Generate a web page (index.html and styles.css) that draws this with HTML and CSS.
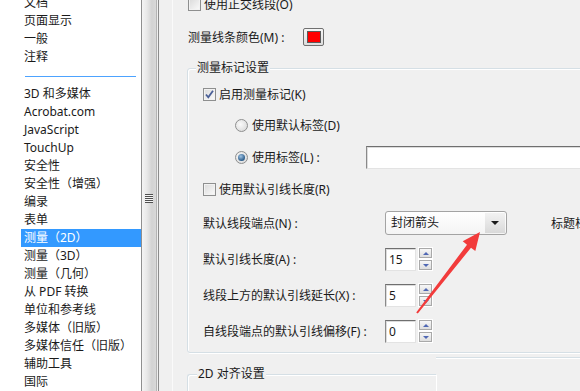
FILE: index.html
```html
<!DOCTYPE html>
<html lang="zh-CN">
<head>
    <meta charset="UTF-8">
    <title>首选项 - 测量（2D）</title>
    <link rel="stylesheet" href="styles.css">
</head>
<body>
    <div class="window">
        <!-- Lista de categorías -->
        <div class="nav">
            <ul class="cats">
                <li>文档</li>
                <li>页面显示</li>
                <li>一般</li>
                <li>注释</li>
                <li class="sep"></li>
                <li>3D 和多媒体</li>
                <li>Acrobat.com</li>
                <li>JavaScript</li>
                <li>TouchUp</li>
                <li>安全性</li>
                <li>安全性（增强）</li>
                <li>编录</li>
                <li>表单</li>
                <li class="active">测量（2D）</li>
                <li>测量（3D）</li>
                <li>测量（几何）</li>
                <li>从 PDF 转换</li>
                <li>单位和参考线</li>
                <li>多媒体（旧版）</li>
                <li>多媒体信任（旧版）</li>
                <li>辅助工具</li>
                <li>国际</li>
            </ul>
        </div>
        <div class="scrollbar"><span class="grip"></span></div>
        <div class="splitter"></div>

        <!-- Panel de opciones -->
        <div class="panel">
            <div class="row row-top">
                <span class="cb"></span>
                <span>使用正交线段(O)</span>
            </div>
            <div class="row row-color">
                <span class="lbl-color">测量线条颜色(M) :</span>
                <span class="swatch"><span class="swatch-fill"></span></span>
            </div>

            <div class="group group-marks">
                <span class="legend">测量标记设置</span>

                <div class="row r1">
                    <span class="cb checked">
                        <svg width="11" height="11" viewBox="0 0 11 11"><path d="M2 5.5 L4.3 8.3 L9 1.8" fill="none" stroke="#4a5f97" stroke-width="1.8"/></svg>
                    </span>
                    <span>启用测量标记(K)</span>
                </div>
                <div class="row r2 indent">
                    <span class="rd"></span>
                    <span>使用默认标签(D)</span>
                </div>
                <div class="row r3 indent">
                    <span class="rd on"></span>
                    <span class="lbl-tag">使用标签(L) :</span>
                    <span class="textbox wide"></span>
                </div>
                <div class="row r4">
                    <span class="cb"></span>
                    <span>使用默认引线长度(R)</span>
                </div>
                <div class="row r5">
                    <span class="lbl">默认线段端点(N) :</span>
                    <span class="combo">
                        <span class="combo-text">封闭箭头</span>
                        <span class="combo-btn"><span class="tri-down"></span></span>
                    </span>
                    <span class="side-label">标题栏</span>
                </div>
                <div class="row r6">
                    <span class="lbl">默认引线长度(A) :</span>
                    <span class="textbox num">15</span>
                    <span class="spin"><span class="spin-up"></span><span class="spin-down"></span></span>
                </div>
                <div class="row r7">
                    <span class="lbl">线段上方的默认引线延长(X) :</span>
                    <span class="textbox num">5</span>
                    <span class="spin"><span class="spin-up"></span><span class="spin-down"></span></span>
                </div>
                <div class="row r8">
                    <span class="lbl">自线段端点的默认引线偏移(F) :</span>
                    <span class="textbox num">0</span>
                    <span class="spin"><span class="spin-up"></span><span class="spin-down"></span></span>
                </div>
            </div>

            <div class="group group-align">
                <span class="legend">2D 对齐设置</span>
            </div>
        </div>

        <!-- Flecha roja de anotación -->
        <svg class="arrow" width="580" height="391" viewBox="0 0 580 391">
            <polygon points="416.2,312.4 467,244.7 462.7,241.3 480,232 475.3,251.1 471,247.7 417.8,313.6" fill="#f23b3b"/>
        </svg>
    </div>
</body>
</html>
```

FILE: styles.css
```css
body {
    margin: 0;
    padding: 0;
    width: 580px;
    height: 391px;
    overflow: hidden;
    background-color: #f0f0f0;
    font-family: 'Noto Sans', 'Noto Sans CJK SC', sans-serif;
    font-size: 12px;
    color: #1a1a1a;
}

.window {
    position: relative;
    display: flex;
    height: 391px;
}

/* lista izquierda */
.nav {
    flex: none;
    width: 141px;
    background-color: #ffffff;
    border-right: 1px solid #8f8f8f;
    overflow: hidden;
}

.cats {
    list-style: none;
    margin: -6px 0 0 0;
    padding: 0 0 0 21px;
}

.cats li {
    height: 18px;
    line-height: 18px;
    padding-left: 3px;
    white-space: nowrap;
}

.cats li.sep {
    height: 19px;
    background: linear-gradient(#4da3ff, #4da3ff) no-repeat 4px 10px / 111px 1px;
}

.cats li.active {
    background-color: #3399ff;
    color: #ffffff;
}

.scrollbar {
    flex: none;
    width: 14px;
    border-right: 1px solid #b4b4b4;
    background: linear-gradient(to right, #f4f4f4, #e8e8e8 35%, #d3d3d3 70%, #d9d9d9);
    display: flex;
    justify-content: center;
    padding-top: 194px;
    box-sizing: content-box;
}

.grip {
    display: block;
    width: 8px;
    height: 9px;
    background: repeating-linear-gradient(#4f4f4f 0, #4f4f4f 1px, #f4f4f4 1px, #f4f4f4 2px);
}

.splitter {
    flex: none;
    width: 13px;
    margin-left: 1px;
    border-left: 1px solid #8c8c8c;
    border-right: 1px solid #fafafa;
}

/* panel derecho */
.panel {
    flex: 1;
    padding-left: 15px;
    overflow: hidden;
}

.row {
    display: flex;
    align-items: center;
    height: 24px;
    white-space: nowrap;
}

.row-top {
    height: 16px;
    margin-top: -4px;
}

.row-color {
    height: 20px;
    margin-top: 15px;
}

.lbl-color {
    width: 115px;
}

.swatch {
    box-sizing: border-box;
    width: 21px;
    height: 18px;
    border: 1px solid #707070;
    border-radius: 2px;
    background: linear-gradient(#f6f6f6, #dddddd);
    display: flex;
    align-items: center;
    justify-content: center;
}

.swatch-fill {
    width: 12px;
    height: 10px;
    background-color: #ff0000;
    border: 1px solid #5a5a5a;
}

/* checkbox y radio */
.cb {
    flex: none;
    box-sizing: border-box;
    width: 13px;
    height: 13px;
    margin-right: 3px;
    border: 1px solid #8e8f8f;
    background: linear-gradient(135deg, #dadada, #fbfbfb);
    box-shadow: inset 0 0 0 1px #f2f2f2;
    display: flex;
    align-items: center;
    justify-content: center;
}

.rd {
    flex: none;
    position: relative;
    box-sizing: border-box;
    width: 13px;
    height: 13px;
    margin-right: 4px;
    border: 1px solid #8e8f8f;
    border-radius: 50%;
    background: radial-gradient(circle at 40% 40%, #fafafa, #d4d4d4);
}

.rd.on::after {
    content: "";
    position: absolute;
    left: 2px;
    top: 2px;
    width: 7px;
    height: 7px;
    border-radius: 50%;
    background: radial-gradient(circle at 40% 35%, #9fc3e4, #2b5c8a 70%, #1f4468);
}

/* grupos */
.group {
    position: relative;
    margin-left: -1px;
    border: 1px solid #d5dfe5;
    border-radius: 3px;
    box-shadow: inset 1px 1px 0 #ffffff, 1px 1px 0 #ffffff;
}

.legend {
    position: absolute;
    top: -9px;
    left: 8px;
    padding: 0 1px;
    line-height: 16px;
    background-color: #f0f0f0;
    white-space: nowrap;
}

.group-marks {
    width: 480px;
    margin-top: 21px;
    padding: 0 0 9px 15px;
}

/* línea del bloque vecino, a la derecha */
.group-marks::after {
    content: "";
    position: absolute;
    left: 248px;
    right: -20px;
    bottom: -6px;
    height: 1px;
    background-color: #d5dfe5;
    box-shadow: 0 1px 0 #ffffff;
}

.group-align {
    width: 248px;
    height: 40px;
    margin-top: 21px;
    border-right: none;
    border-top-right-radius: 0;
}

.group-align .legend {
    left: 9px;
}

.r1 { margin-top: 13px; }
.r2 { margin-top: 7px; }
.r3 { margin-top: 8px; }
.r4 { margin-top: 8px; }
.r5 { margin-top: 10px; }
.r6, .r7, .r8 { margin-top: 12px; }

.indent {
    padding-left: 32px;
}

.lbl-tag {
    width: 114px;
}

.lbl {
    width: 182px;
}

.textbox {
    box-sizing: border-box;
    height: 23px;
    background-color: #ffffff;
    border-top: 1px solid #6f6f6f;
    border-left: 1px solid #8a8a8a;
    border-right: 1px solid #e3e3e3;
    border-bottom: 1px solid #e3e3e3;
    box-shadow: inset 1px 1px 0 #dcdcdc;
}

.textbox.wide {
    width: 300px;
}

.textbox.num {
    width: 31px;
    padding-left: 3px;
    line-height: 21px;
}

/* combo */
.combo {
    box-sizing: border-box;
    display: flex;
    width: 122px;
    height: 24px;
    border: 1px solid #a3a3a3;
    border-radius: 3px;
    background: linear-gradient(#ffffff, #f4f4f4);
}

.combo-text {
    flex: 1;
    padding-left: 5px;
    line-height: 22px;
}

.combo-btn {
    width: 20px;
    margin: 1px;
    background: linear-gradient(#f2f2f2, #d9d9d9);
    display: flex;
    align-items: center;
    justify-content: center;
}

.tri-down {
    width: 0;
    height: 0;
    border-left: 4px solid transparent;
    border-right: 4px solid transparent;
    border-top: 4px solid #1a1a1a;
}

.side-label {
    margin-left: 44px;
}

/* spin */
.spin {
    display: flex;
    flex-direction: column;
    gap: 2px;
    margin-left: 3px;
}

.spin-up, .spin-down {
    box-sizing: border-box;
    width: 13px;
    height: 10px;
    border: 1px solid #a9a9a9;
    background: linear-gradient(#f7f7f7, #dedede);
    box-shadow: 0 0 0 1px #ffffff;
    display: flex;
    align-items: center;
    justify-content: center;
}

.spin-up::after {
    content: "";
    border-left: 3px solid transparent;
    border-right: 3px solid transparent;
    border-bottom: 3px solid #5068b4;
}

.spin-down::after {
    content: "";
    border-left: 3px solid transparent;
    border-right: 3px solid transparent;
    border-top: 3px solid #5068b4;
}

.arrow {
    position: absolute;
    left: 0;
    top: 0;
    pointer-events: none;
}
```
